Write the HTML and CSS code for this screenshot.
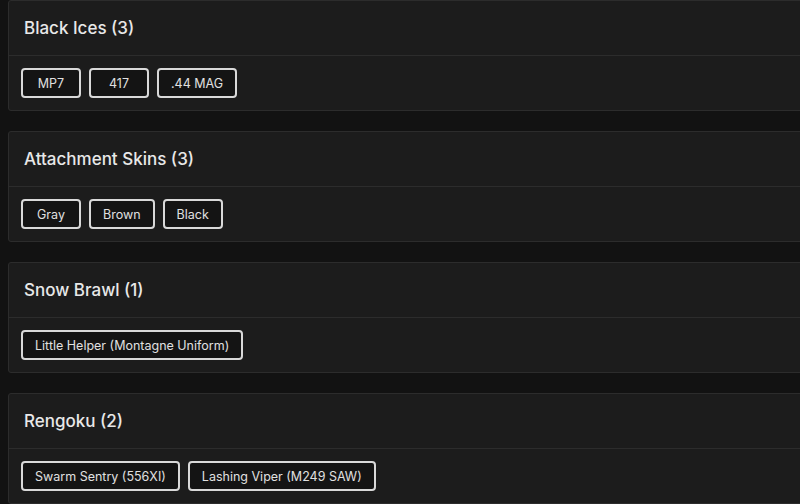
FILE: index.html
```html
<!DOCTYPE html>
<html>
<head>
<meta charset="utf-8">
<link rel="stylesheet" href="styles.css">
</head>
<body>
<div class="page">
  <section class="card">
    <div class="card-head"><h2 class="title">Black Ices (3)</h2></div>
    <div class="card-body">
      <span class="chip">MP7</span>
      <span class="chip">417</span>
      <span class="chip">.44 MAG</span>
    </div>
  </section>
  <section class="card">
    <div class="card-head"><h2 class="title">Attachment Skins (3)</h2></div>
    <div class="card-body">
      <span class="chip">Gray</span>
      <span class="chip">Brown</span>
      <span class="chip">Black</span>
    </div>
  </section>
  <section class="card">
    <div class="card-head"><h2 class="title">Snow Brawl (1)</h2></div>
    <div class="card-body">
      <span class="chip">Little Helper (Montagne Uniform)</span>
    </div>
  </section>
  <section class="card">
    <div class="card-head"><h2 class="title">Rengoku (2)</h2></div>
    <div class="card-body">
      <span class="chip">Swarm Sentry (556XI)</span>
      <span class="chip">Lashing Viper (M249 SAW)</span>
    </div>
  </section>
</div>
</body>
</html>
```

FILE: styles.css
```css
html, body {
  margin: 0;
  padding: 0;
  background: #121212;
  overflow: hidden;
}
body {
  width: 800px;
  height: 504px;
  font-family: Inter, "Noto Sans", sans-serif;
}
.page {
  display: flex;
  flex-direction: column;
  gap: 20px;
  padding: 0 0 0 8px;
  margin-right: -30px;
}
.card {
  background: #1c1c1c;
  border: 1px solid #2c2c2c;
  border-radius: 3px;
}
.card-head {
  height: 54px;
  display: flex;
  align-items: center;
  padding: 0 15px;
  border-bottom: 1px solid #2c2c2c;
}
.title {
  margin: 0;
  font-size: 17px;
  font-weight: 500;
  color: #e8e8e8;
}
.card-body {
  display: flex;
  gap: 8px;
  padding: 12px;
}
.chip {
  height: 30px;
  min-width: 60px;
  box-sizing: border-box;
  display: inline-flex;
  align-items: center;
  justify-content: center;
  padding: 0 12px;
  border: 2px solid #d9d9d9;
  border-radius: 4px;
  background: #141414;
  color: #e0e0e0;
  font-size: 12.5px;
}
```
